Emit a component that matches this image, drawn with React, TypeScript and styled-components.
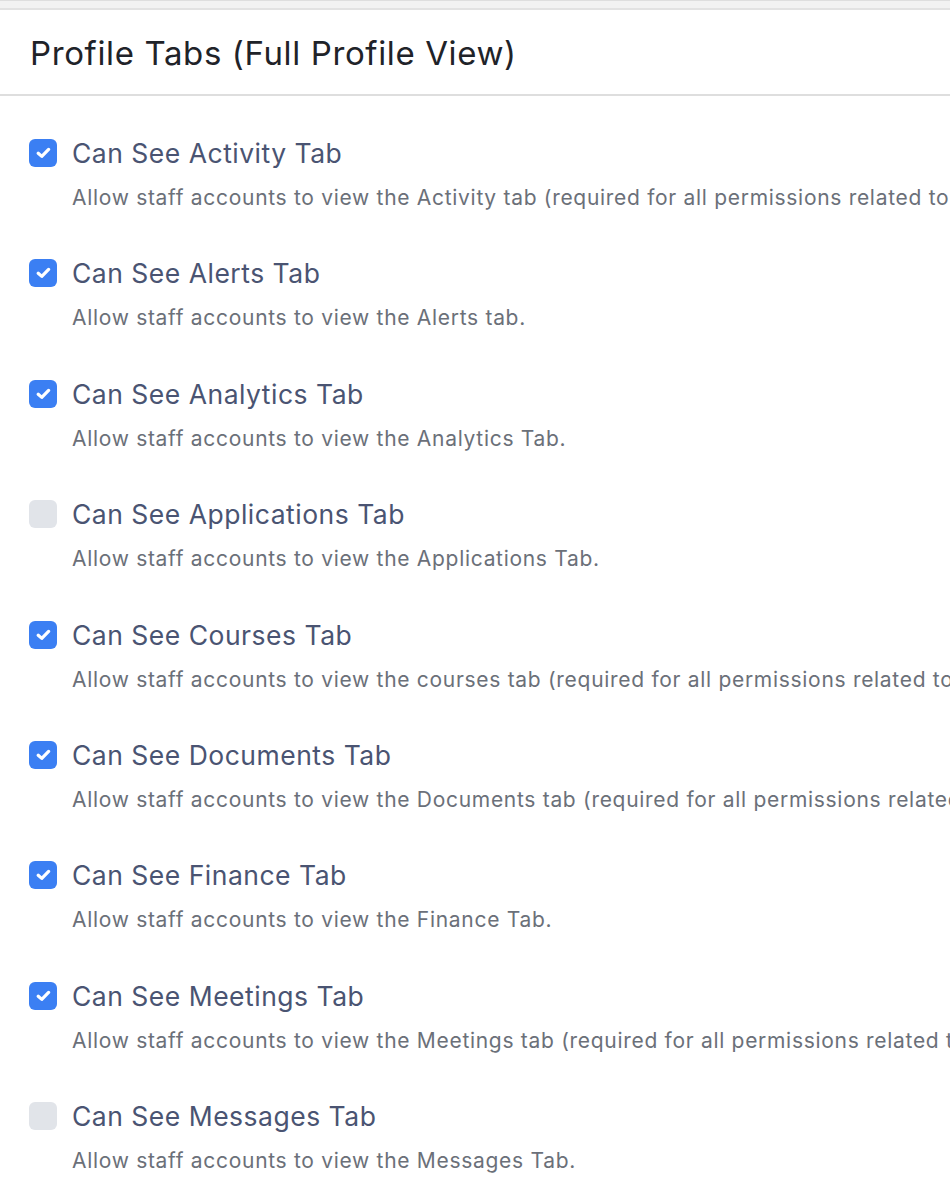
import React, { useState } from 'react'
import styled, { createGlobalStyle } from 'styled-components'

const GlobalStyle = createGlobalStyle`
  html, body {
    margin: 0;
    padding: 0;
    background: #fff;
    overflow-x: hidden;
  }
  body {
    font-family: Inter, "Noto Sans", "Liberation Sans", sans-serif;
  }
`

type Permission = {
  title: string
  description: string
  checked: boolean
}

const permissions: Permission[] = [
  {
    title: 'Can See Activity Tab',
    description:
      'Allow staff accounts to view the Activity tab (required for all permissions related to activities).',
    checked: true,
  },
  {
    title: 'Can See Alerts Tab',
    description: 'Allow staff accounts to view the Alerts tab.',
    checked: true,
  },
  {
    title: 'Can See Analytics Tab',
    description: 'Allow staff accounts to view the Analytics Tab.',
    checked: true,
  },
  {
    title: 'Can See Applications Tab',
    description: 'Allow staff accounts to view the Applications Tab.',
    checked: false,
  },
  {
    title: 'Can See Courses Tab',
    description:
      'Allow staff accounts to view the courses tab (required for all permissions related to courses).',
    checked: true,
  },
  {
    title: 'Can See Documents Tab',
    description:
      'Allow staff accounts to view the Documents tab (required for all permissions related to documents).',
    checked: true,
  },
  {
    title: 'Can See Finance Tab',
    description: 'Allow staff accounts to view the Finance Tab.',
    checked: true,
  },
  {
    title: 'Can See Meetings Tab',
    description:
      'Allow staff accounts to view the Meetings tab (required for all permissions related to meetings).',
    checked: true,
  },
  {
    title: 'Can See Messages Tab',
    description: 'Allow staff accounts to view the Messages Tab.',
    checked: false,
  },
]

const App: React.FC = () => {
  const [items, setItems] = useState<Permission[]>(permissions)

  const toggle = (i: number) => {
    const tmp = items.slice()
    tmp[i] = { ...tmp[i], checked: !tmp[i].checked }
    setItems(tmp)
  }

  return (
    <>
      <GlobalStyle />
      <TopBand />
      <Header>
        <Title>Profile Tabs (Full Profile View)</Title>
      </Header>
      <List>
        {items.map((item, i) => (
          <Item key={item.title}>
            <Box checked={item.checked} onClick={() => toggle(i)}>
              {item.checked && (
                <svg width="15" height="12" viewBox="0 0 15 12">
                  <path
                    d="M2.2 6.2 L5.8 9.4 L12.6 2.4"
                    fill="none"
                    stroke="#fff"
                    strokeWidth="3.2"
                    strokeLinecap="round"
                    strokeLinejoin="round"
                  />
                </svg>
              )}
            </Box>
            <Texts>
              <Label onClick={() => toggle(i)}>{item.title}</Label>
              <Description>{item.description}</Description>
            </Texts>
          </Item>
        ))}
      </List>
    </>
  )
}

export default App

const TopBand = styled.div`
  height: 7px;
  background: #f2f2f2;
  border-top: 1px solid #dedede;
  border-bottom: 2px solid #e2e2e2;
`

const Header = styled.div`
  height: 84px;
  display: flex;
  align-items: center;
  padding: 0 30px;
  border-bottom: 2px solid #dedede;
`

const Title = styled.h1`
  margin: 2px 0 0;
  font-size: 33px;
  font-weight: 400;
  color: #1f2329;
  letter-spacing: 0.62px;
`

const List = styled.div`
  padding: 42px 0 0 29px;
  overflow: hidden;
`

const Item = styled.div`
  display: flex;
  align-items: flex-start;
  gap: 15px;
  height: 120.4px;
`

const Box = styled.div<{ checked: boolean }>`
  flex: none;
  width: 28px;
  height: 28px;
  margin-top: 1px;
  border-radius: 6px;
  background: ${props => (props.checked ? '#3b7ff3' : '#e1e4e9')};
  display: flex;
  align-items: center;
  justify-content: center;
  cursor: pointer;
`

const Texts = styled.div`
  display: flex;
  flex-direction: column;
  gap: 16px;
  min-width: 0;
`

const Label = styled.div`
  font-size: 26.5px;
  line-height: 30px;
  letter-spacing: 0.5px;
  color: #4a5472;
  white-space: nowrap;
  cursor: pointer;
`

const Description = styled.div`
  font-size: 21px;
  line-height: 28px;
  letter-spacing: 0.7px;
  color: #6b7079;
  white-space: nowrap;
`
